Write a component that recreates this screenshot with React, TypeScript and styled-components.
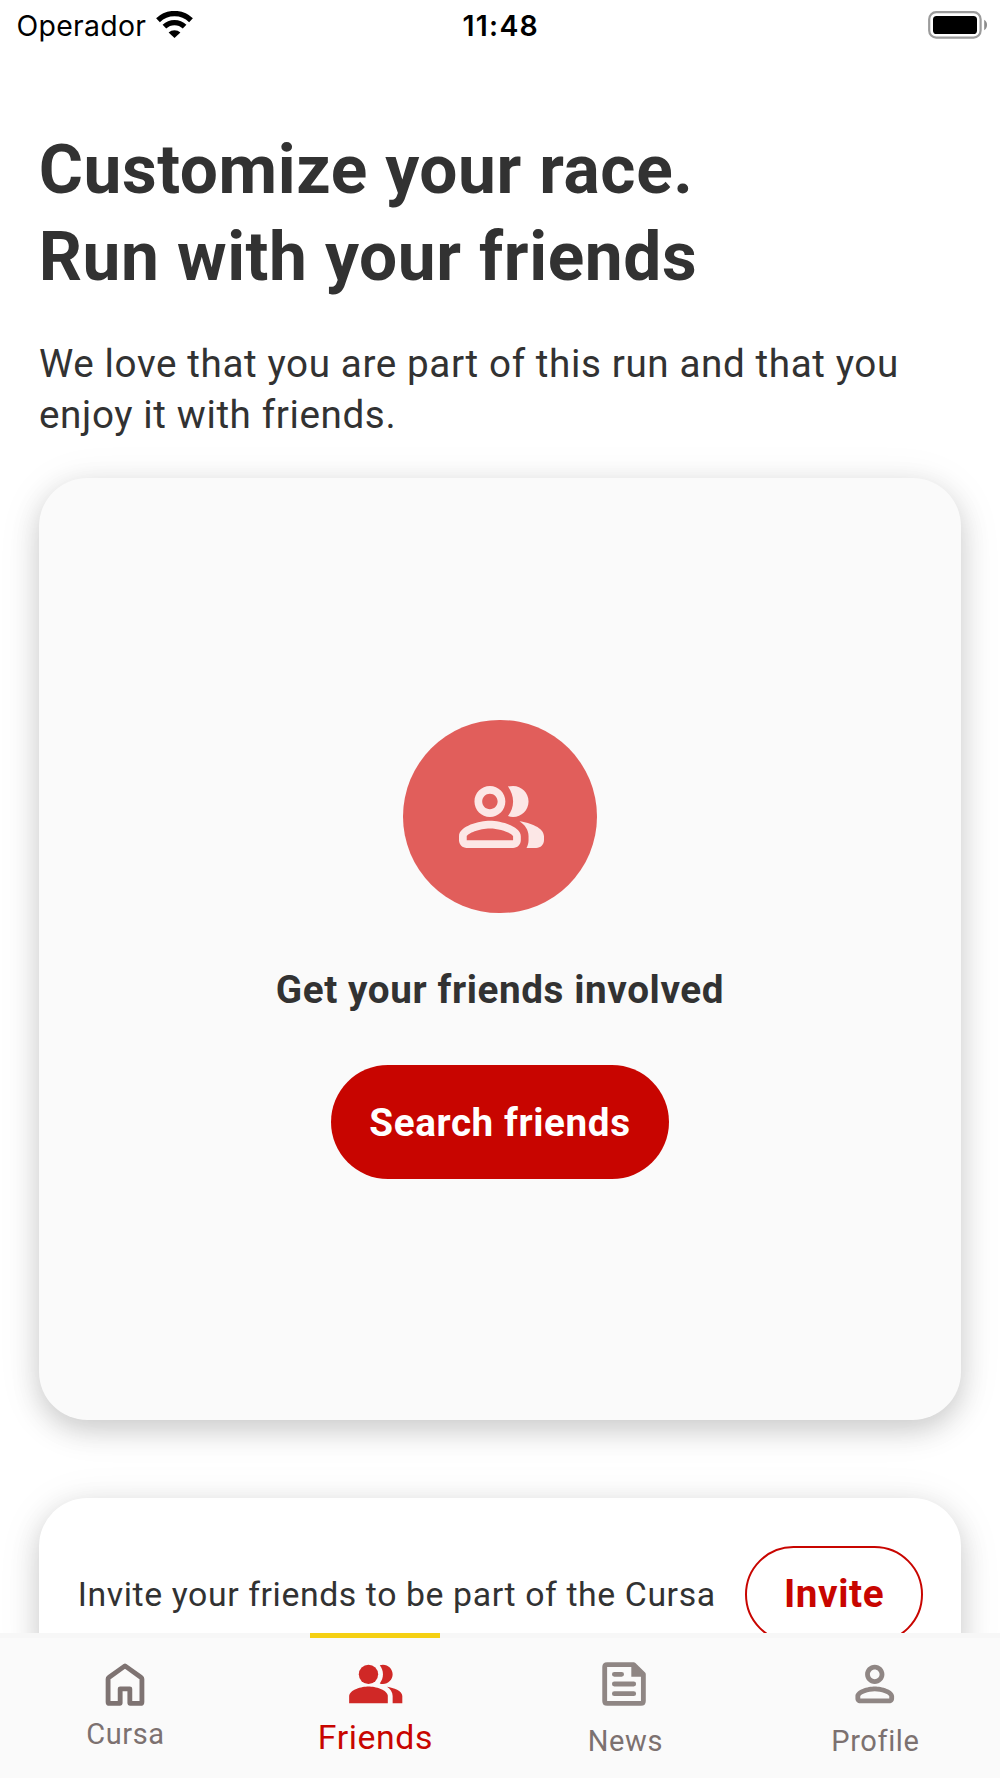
import React from 'react';
import styled, { createGlobalStyle } from 'styled-components';

const GlobalStyle = createGlobalStyle`
  * { box-sizing: border-box; }
  html, body { margin: 0; padding: 0; background: #fff; }
  button { font: inherit; letter-spacing: inherit; cursor: pointer; }
`;

const colors = {
  text: '#323232',
  red: '#c80500',
  redSoft: '#e15e5b',
  grey: '#7c7170',
  surface: '#fafafa',
  yellow: '#f5d013',
};

const Screen = styled.div`
  display: flex;
  flex-direction: column;
  width: 1000px;
  height: 1778px;
  overflow: hidden;
  background: #fff;
  color: ${colors.text};
  font-family: Roboto, 'Liberation Sans', sans-serif;
  letter-spacing: 0.6px;
`;

const StatusBar = styled.header`
  display: grid;
  grid-template-columns: 1fr auto 1fr;
  align-items: center;
  flex: none;
  height: 49px;
  padding: 0 12px 0 16.5px;
  color: #000;
  font-family: Inter, sans-serif;
  font-size: 28.4px;
  line-height: 50px;
`;

const Carrier = styled.div`
  display: flex;
  align-items: center;
  gap: 9.5px;
  padding-top: 1px;
  letter-spacing: 0.3px;

  svg { margin-top: -4px; }
`;

const Clock = styled.time`
  padding: 1px 3px 0 0;
  font-weight: 600;
  letter-spacing: 1.3px;
`;

const BatterySlot = styled.div`
  display: flex;
  justify-content: flex-end;
  padding-bottom: 2px;
`;

const Content = styled.main`
  flex: 1;
  min-height: 0;
  overflow: hidden;
  padding: 77.5px 38.65px 0;
`;

const Title = styled.h1`
  margin: 0;
  font-size: 67.6px;
  font-weight: 700;
  line-height: 87px;
`;

const Lead = styled.p`
  margin: 38.5px 0 38px;
  padding-left: 0.4px;
  font-size: 38.65px;
  line-height: 50.7px;
`;

const Card = styled.section`
  border-radius: 48.3px;
  box-shadow: 0 10px 28px rgba(0, 0, 0, 0.16), 0 6px 46px rgba(0, 0, 0, 0.08);
`;

const FriendsCard = styled(Card)`
  display: flex;
  flex-direction: column;
  align-items: center;
  justify-content: center;
  gap: 51px;
  height: 942px;
  background: ${colors.surface};
`;

const Avatar = styled.div`
  display: flex;
  align-items: center;
  justify-content: center;
  width: 193.3px;
  height: 193.3px;
  padding-left: 3px;
  border-radius: 50%;
  background: ${colors.redSoft};
`;

const CardTitle = styled.h2`
  margin: 1px 0 -1px;
  font-size: 38.65px;
  font-weight: 700;
  line-height: 50px;
`;

const PillButton = styled.button<{ $outlined?: boolean }>`
  flex: none;
  width: ${p => (p.$outlined ? '177.4px' : '338.4px')};
  height: ${p => (p.$outlined ? '96.6px' : '113.6px')};
  padding: ${p => (p.$outlined ? '0' : '2px 0 0')};
  border: ${p => (p.$outlined ? `2px solid ${colors.red}` : '0')};
  border-radius: 60px;
  background: ${p => (p.$outlined ? '#fff' : colors.red)};
  color: ${p => (p.$outlined ? colors.red : '#fff')};
  font-size: 38.65px;
  font-weight: 700;
  line-height: 1;
`;

const InviteCard = styled(Card)`
  display: flex;
  align-items: flex-start;
  justify-content: space-between;
  height: 193px;
  margin-top: 77.5px;
  padding: 48.3px 38.65px;
  background: #fff;
`;

const InviteText = styled.p`
  margin: 0;
  padding-left: 0.4px;
  font-size: 33.8px;
  line-height: 98px;
  white-space: nowrap;
`;

const TabBar = styled.nav`
  display: grid;
  grid-template-columns: repeat(4, 1fr);
  flex: none;
  height: 145px;
  border-top: 5px solid #f7f7f7;
  background: ${colors.surface};
`;

const Tab = styled.a<{ $active?: boolean; $gap: number }>`
  display: flex;
  flex-direction: column;
  align-items: center;
  gap: ${p => p.$gap}px;
  margin-top: -5px;
  padding-left: 0.8px;
  color: ${p => (p.$active ? colors.red : colors.grey)};
  font-size: ${p => (p.$active ? '33.8px' : '29px')};
  line-height: ${p => (p.$active ? '40px' : '34px')};
`;

const TabIcon = styled.div<{ $active?: boolean; $color: string }>`
  display: flex;
  justify-content: center;
  width: 130px;
  height: 79.6px;
  padding-top: ${p => (p.$active ? '17px' : '22px')};
  border-top: ${p => (p.$active ? `5px solid ${colors.yellow}` : '0')};
  color: ${p => p.$color};

  svg { display: block; flex: none; }
`;

const WifiIcon = () => (
  <svg width="37" height="27" viewBox="0 0 37 27" fill="none">
    <path d="M2 9.2a23.8 23.8 0 0 1 33 0" stroke="#000" strokeWidth="5.4" />
    <path d="M8.4 15.6a14.6 14.6 0 0 1 20.2 0" stroke="#000" strokeWidth="5.2" />
    <path d="M18.5 27l-5.9-5.5a8.6 8.6 0 0 1 11.8 0z" fill="#000" />
  </svg>
);

const BatteryIcon = () => (
  <svg width="60" height="28" viewBox="0 0 60 28">
    <rect x="1.2" y="1.2" width="51.4" height="25.4" rx="7" fill="none" stroke="#9b9b9b" strokeWidth="2.2" />
    <rect x="5" y="5" width="44" height="18" rx="3.6" fill="#000" />
    <path d="M56.2 8.8v10.4c3.8-1.8 3.8-8.6 0-10.4z" fill="#8c8c8c" />
  </svg>
);

const PeopleOutlineIcon = () => (
  <svg width="85" height="62" viewBox="1 4 22 16" fill="#fce7e6">
    <path fillRule="evenodd" d="M9 12c2.21 0 4-1.79 4-4s-1.79-4-4-4-4 1.79-4 4 1.79 4 4 4zm0-6c1.1 0 2 .9 2 2s-.9 2-2 2-2-.9-2-2 .9-2 2-2z" />
    <path fillRule="evenodd" d="M9 13c-2.67 0-8 1.34-8 4v1c0 1.1.9 2 2 2h12c1.1 0 2-.9 2-2v-1c0-2.66-5.33-4-8-4zm6 5H3v-.99C3.2 16.29 6.3 15 9 15s5.8 1.29 6 2v1z" />
    <path d="M13.67 11.76c.42.14.86.24 1.33.24 2.21 0 4-1.79 4-4s-1.79-4-4-4c-.47 0-.91.1-1.33.1C14.5 5.27 15 6.58 15 8s-.5 2.73-1.33 3.76z" />
    <path d="M16.67 13.13C18.04 14.06 19 15.32 19 17v1c0 .73-.2 1.4-.53 2H21c1.1 0 2-.9 2-2v-1c0-2.18-3.57-3.47-6.33-3.87z" />
  </svg>
);

const HomeIcon = () => (
  <svg width="58" height="58" viewBox="0 0 24 24" fill="none" stroke="currentColor" strokeWidth="2" strokeLinejoin="round">
    <path d="M12 4.5l-6.7 4.8q-.3.2-.3.6V19.4q0 .6.6.6H10v-6h4v6h4.4q.6 0 .6-.6V9.9q0-.4-.3-.6z" />
  </svg>
);

const PeopleIcon = () => (
  <svg width="58" height="58" viewBox="-0.3 0 24 24" fill="currentColor">
    <circle cx="9" cy="8" r="4" />
    <path d="M9 13c-2.67 0-8 1.34-8 4v3h16v-3c0-2.66-5.33-4-8-4z" />
    <path d="M13.67 11.76c.42.14.86.24 1.33.24 2.21 0 4-1.79 4-4s-1.79-4-4-4c-.47 0-.91.1-1.33.24C14.5 5.27 15 6.58 15 8s-.5 2.73-1.33 3.76z" />
    <path d="M16.67 13.13C18.04 14.06 19 15.32 19 17v3h4v-3c0-2.18-3.57-3.47-6.33-3.87z" />
  </svg>
);

const NewsIcon = () => (
  <svg width="58" height="58" viewBox="0.4 0 24 24" fill="none">
    <path d="M16 4H5q-1 0-1 1v14q0 1 1 1h14q1 0 1-1V8z" stroke="currentColor" strokeWidth="2" strokeLinejoin="round" />
    <path d="M15 4v5h5.5L16 4z" fill="currentColor" />
    <path d="M8 8h3M8 12h8M8 16h8" stroke="currentColor" strokeWidth="2" strokeLinecap="round" />
  </svg>
);

const PersonIcon = () => (
  <svg width="58" height="58" viewBox="0.1 0 24 24" fill="currentColor" fillRule="evenodd">
    <path d="M12 12c2.21 0 4-1.79 4-4s-1.79-4-4-4-4 1.79-4 4 1.79 4 4 4zm0-6c1.1 0 2 .9 2 2s-.9 2-2 2-2-.9-2-2 .9-2 2-2z" />
    <path d="M12 13c-2.67 0-8 1.34-8 4v1c0 1.1.9 2 2 2h12c1.1 0 2-.9 2-2v-1c0-2.66-5.33-4-8-4zm6 5H6v-.99C6.2 16.29 9.3 15 12 15s5.8 1.29 6 2v1z" />
  </svg>
);

const tabs = [
  { label: 'Cursa', icon: <HomeIcon />, color: '#7e7372', gap: 4.2, active: false },
  { label: 'Friends', icon: <PeopleIcon />, color: '#d02826', gap: 5.6, active: true },
  { label: 'News', icon: <NewsIcon />, color: '#8f8684', gap: 11.8, active: false },
  { label: 'Profile', icon: <PersonIcon />, color: '#8f8684', gap: 11.8, active: false },
];

export default function App() {
  return (
    <>
      <GlobalStyle />
      <Screen>
        <StatusBar>
          <Carrier>
            Operador
            <WifiIcon />
          </Carrier>
          <Clock>11:48</Clock>
          <BatterySlot>
            <BatteryIcon />
          </BatterySlot>
        </StatusBar>
        <Content>
          <Title>
            Customize your race.
            <br />
            Run with your friends
          </Title>
          <Lead>
            We love that you are part of this run and that you
            <br />
            enjoy it with friends.
          </Lead>
          <FriendsCard>
            <Avatar>
              <PeopleOutlineIcon />
            </Avatar>
            <CardTitle>Get your friends involved</CardTitle>
            <PillButton>Search friends</PillButton>
          </FriendsCard>
          <InviteCard>
            <InviteText>Invite your friends to be part of the Cursa</InviteText>
            <PillButton $outlined>Invite</PillButton>
          </InviteCard>
        </Content>
        <TabBar>
          {tabs.map(tab => (
            <Tab key={tab.label} $active={tab.active} $gap={tab.gap}>
              <TabIcon $active={tab.active} $color={tab.color}>
                {tab.icon}
              </TabIcon>
              {tab.label}
            </Tab>
          ))}
        </TabBar>
      </Screen>
    </>
  );
}
